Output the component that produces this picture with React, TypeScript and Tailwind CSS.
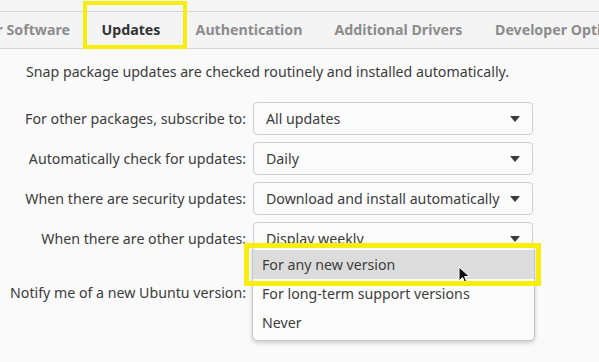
import React from 'react';

const font = { fontFamily: '"Noto Sans", "Open Sans", sans-serif' };

const TABS = [
  { label: 'Other Software', w: 'w-[86px] justify-end pr-4', active: false },
  { label: 'Updates', w: 'w-[90px] justify-center', active: true },
  { label: 'Authentication', w: 'w-[146px] justify-center', active: false },
  { label: 'Additional Drivers', w: 'w-[153px] justify-center', active: false },
  { label: 'Developer Options', w: 'w-[160px] justify-start pl-5', active: false },
];

const ROWS = [
  { label: 'For other packages, subscribe to:', value: 'All updates' },
  { label: 'Automatically check for updates:', value: 'Daily' },
  { label: 'When there are security updates:', value: 'Download and install automatically' },
  { label: 'When there are other updates:', value: 'Display weekly' },
];

function Arrow() {
  return (
    <svg width="10" height="6" viewBox="0 0 10 6" className="shrink-0">
      <path d="M0 0 H10 L5 6 Z" fill="#3a3a3a" />
    </svg>
  );
}

function Combo({ value, children }: { value?: string; children?: React.ReactNode }) {
  return (
    <div className="relative w-[280px] h-[33px] rounded-[4px] border border-[#cfcfcf] bg-[#fbfbfb] flex items-center justify-between gap-2 pl-3 pr-3">
      <span className="whitespace-nowrap">{value}</span>
      <Arrow />
      {children}
    </div>
  );
}

function Cursor() {
  return (
    <svg width="13" height="19" viewBox="0 0 13 19" className="absolute left-[205px] top-[19px]">
      <path d="M1 1 L1 15 L4.5 11.5 L7 17 L9 16 L6.6 10.6 L11.5 10.6 Z" fill="#111" stroke="#fff" strokeWidth="1" strokeLinejoin="round" />
    </svg>
  );
}

export default function App() {
  return (
    <div className="relative w-[599px] h-[362px] overflow-hidden bg-[#fafafa] text-[#3c3c3c] text-[14.2px]" style={font}>
      {/* tab bar */}
      <div className="h-[11px] bg-[#f5f5f5]" />
      <div className="h-[38px] bg-[#f4f4f4] border-y border-[#d6d6d6] flex items-center overflow-hidden font-bold">
        {TABS.map((t) => (
          <div key={t.label} className={`${t.w} shrink-0 h-full flex items-center overflow-hidden whitespace-nowrap ${t.active ? 'text-[#333]' : 'text-[#8c8c8c]'}`}>
            {t.label}
          </div>
        ))}
      </div>
      <div className="absolute left-[83px] top-[1px] w-[104px] h-[48px] border-[4px] border-[#f7ee0c]" />

      {/* content */}
      <p className="mt-[12px] pl-[26px] whitespace-nowrap">Snap package updates are checked routinely and installed automatically.</p>

      <div className="mt-[20px] flex flex-col gap-[7px]">
        {ROWS.map((r, i) => (
          <div key={r.label} className="flex items-center">
            <div className="w-[246px] text-right whitespace-nowrap">{r.label}</div>
            <div className="ml-[7px]">
              {i === 3 ? (
                <Combo value={r.value}>
                  <div className="absolute z-10 left-[-2px] top-[23px] w-[283px] rounded-[5px] border border-[#c6c6c6] bg-[#fcfcfc] shadow-[0_2px_4px_rgba(0,0,0,0.18)] py-[3px]">
                    <div className="h-[29px] bg-[#dcdcdc] flex items-center pl-[9px]">For any new version</div>
                    <div className="h-[29px] flex items-center pl-[9px]">For long-term support versions</div>
                    <div className="h-[29px] flex items-center pl-[9px]">Never</div>
                    <Cursor />
                    <div className="absolute left-[-9px] top-[-4px] w-[297px] h-[43px] border-[5px] border-[#f7ee0c]" />
                  </div>
                </Combo>
              ) : (
                <Combo value={r.value} />
              )}
            </div>
          </div>
        ))}
        <div className="flex items-center mt-[14px]">
          <div className="w-[246px] text-right whitespace-nowrap">Notify me of a new Ubuntu version:</div>
          <div className="ml-[7px]">
            <Combo />
          </div>
        </div>
      </div>
    </div>
  );
}
